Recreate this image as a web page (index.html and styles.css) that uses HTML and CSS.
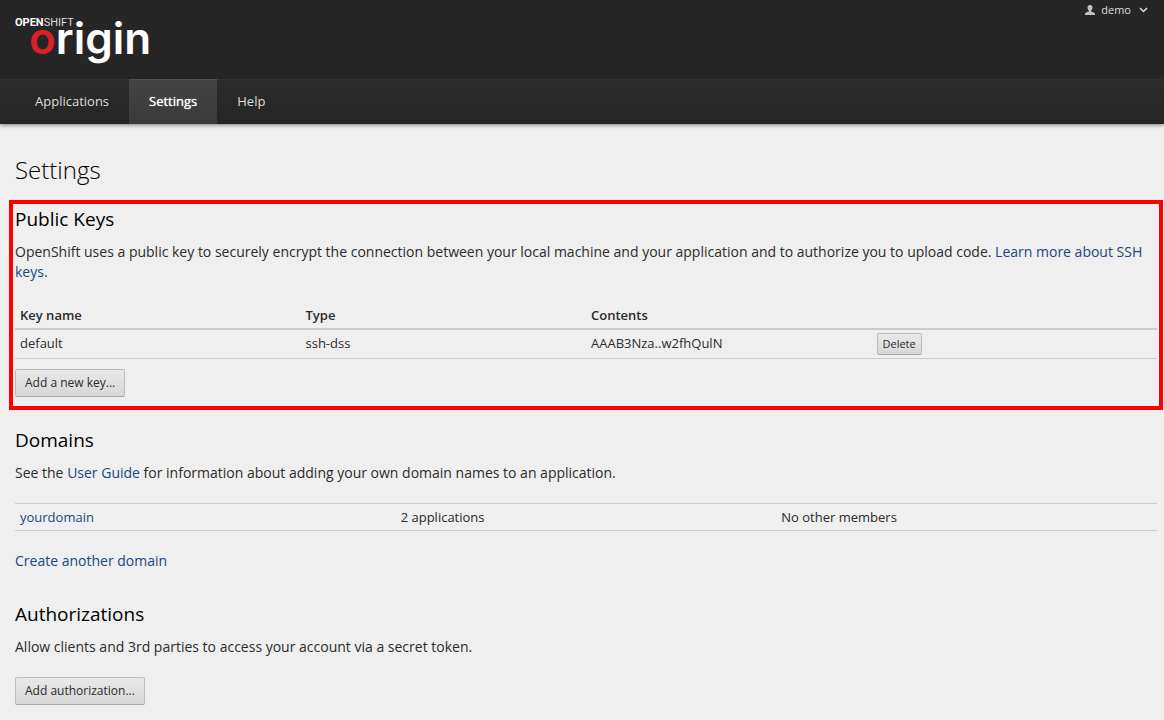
FILE: index.html
```html
<!DOCTYPE html>
<html lang="en">
<head>
<meta charset="utf-8">
<meta name="viewport" content="width=device-width, initial-scale=1">
<title>Settings | OpenShift Origin</title>
<link rel="stylesheet" href="styles.css">
</head>
<body>
<header class="masthead">
  <div class="brand-bar">
    <a class="brand" href="#" aria-label="OpenShift Origin">
      <svg class="logo" width="140" height="62" viewBox="0 0 140 62">
        <text class="logo-top" x="0" y="12"><tspan class="logo-strong">OPEN</tspan>SHIFT</text>
        <text class="logo-word" x="14" y="40"><tspan class="logo-red">o</tspan>rigin</text>
      </svg>
    </a>
    <button class="user-menu" type="button">
      <svg width="10" height="10" viewBox="0 0 10 10" aria-hidden="true"><path fill="#c4c4c4" d="M5 0C3.300 0 2.500 1.100 2.500 2.600c0 1.500.600 2.300 1.300 3v.9C3.300 7.200 0 7.200 0 9v1h10V9C10 7.200 6.700 7.200 6.200 6.500v-.9c.7-.7 1.300-1.500 1.300-3C7.500 1.100 6.700 0 5 0z"/></svg>
      <span>demo</span>
      <svg class="chevron" width="9" height="6" viewBox="0 0 9 6" aria-hidden="true"><path d="M1 1 4.500 4.500 8 1" fill="none" stroke="#ddd" stroke-width="1.500"/></svg>
    </button>
  </div>
  <nav class="main-nav">
    <a href="#">Applications</a>
    <a class="active" href="#" aria-current="page">Settings</a>
    <a href="#">Help</a>
  </nav>
</header>
<main class="content">
  <h1>Settings</h1>
  <section class="highlighted">
    <h2>Public Keys</h2>
    <p>OpenShift uses a public key to securely encrypt the connection between your local machine and your application and to authorize you to upload code. <a href="#">Learn more about SSH keys.</a></p>
    <table class="keys">
      <thead>
        <tr><th scope="col">Key name</th><th scope="col">Type</th><th scope="col">Contents</th><td></td></tr>
      </thead>
      <tbody>
        <tr><td>default</td><td>ssh-dss</td><td>AAAB3Nza..w2fhQulN</td><td class="action"><button class="btn btn-small" type="button">Delete</button></td></tr>
      </tbody>
    </table>
    <button class="btn" type="button">Add a new key...</button>
  </section>
  <section class="domains">
    <h2>Domains</h2>
    <p>See the <a href="#">User Guide</a> for information about adding your own domain names to an application.</p>
    <table class="domain-list">
      <tbody>
        <tr><td><a href="#">yourdomain</a></td><td>2 applications</td><td>No other members</td></tr>
      </tbody>
    </table>
    <p><a href="#">Create another domain</a></p>
  </section>
  <section class="authorizations">
    <h2>Authorizations</h2>
    <p>Allow clients and 3rd parties to access your account via a secret token.</p>
    <button class="btn" type="button">Add authorization...</button>
  </section>
</main>
</body>
</html>
```
FILE: styles.css
```css
* { box-sizing: border-box; }
body {
  margin: 0;
  background: #efefef;
  color: #2b2b2b;
  font: 14px/20px "Open Sans", sans-serif;
}
a { color: #214580; text-decoration: none; }

.masthead {
  background: #262626;
  box-shadow: 0 1px 4px rgba(0, 0, 0, .5);
}
.brand-bar {
  display: flex;
  justify-content: space-between;
  align-items: flex-start;
  height: 79px;
  padding: 0 16px 0 15px;
}
.brand { display: block; padding-top: 14px; }
.logo { display: block; overflow: visible; fill: #fff; }
.logo-top { font: 11px Roboto, sans-serif; fill: #ddd; }
.logo-strong { font-weight: 700; fill: #fff; }
.logo-word { font: 600 44px Inter, sans-serif; }
.logo-red { fill: #db2127; }
.user-menu {
  display: flex;
  align-items: center;
  gap: 6px;
  padding: 0;
  border: 0;
  background: none;
  color: #ddd;
  font: 11px/20px "Open Sans", sans-serif;
}
.chevron { margin-left: 2px; }
.main-nav {
  display: flex;
  padding-left: 15px;
  border-top: 1px solid #333;
  background: linear-gradient(#2c2c2c, #252525);
}
.main-nav a {
  padding: 11px 20px 13px;
  color: #ddd;
  font-size: 13px;
}
.main-nav .active {
  margin-top: -1px;
  border-top: 1px solid #505050;
  background: linear-gradient(#444, #3a3a3a);
  color: #fff;
  text-shadow: 0 0 1px #fff;
}

.content { padding: 31px 7px 15px 15px; }
h1, h2 { margin: 0; color: #000; line-height: 30px; }
h1 { margin-bottom: 15px; font-size: 24px; font-weight: 300; }
h2 { margin-bottom: 8px; font-size: 19px; font-weight: 400; }
p { margin: 0 0 20px; }
.highlighted {
  margin: 0 -6px 15px;
  padding: 0 2px 9px;
  border: 4px solid #f00;
}
.domains { margin-bottom: 28px; }
.domains p:last-child { margin: 0; }

table {
  width: 100%;
  table-layout: fixed;
  border-collapse: separate;
  border-spacing: 0;
  font-size: 13px;
}
th, td { padding: 3px 5px 5px; text-align: left; vertical-align: top; border-bottom: 1px solid #ccc; }
th { padding: 5px 5px 3px; font-weight: 600; }
.keys { margin: -2px 0 10px; }
.keys thead th, .keys thead td { border-bottom-width: 2px; }
.keys .action { padding: 3px 5px; }
.domain-list { margin-bottom: 20px; }
.domain-list td { padding: 3px 5px; border-top: 1px solid #ccc; }

.btn {
  display: block;
  padding: 3px 9px;
  border: 1px solid #bbb;
  border-bottom-color: #a6a6a6;
  border-radius: 2px;
  background: linear-gradient(#e9e9e9, #d7d7d7);
  color: #2b2b2b;
  font: 12px/20px "Open Sans", sans-serif;
}
.btn-small { padding: 2px 5px; font-size: 11px; line-height: 16px; }
```
